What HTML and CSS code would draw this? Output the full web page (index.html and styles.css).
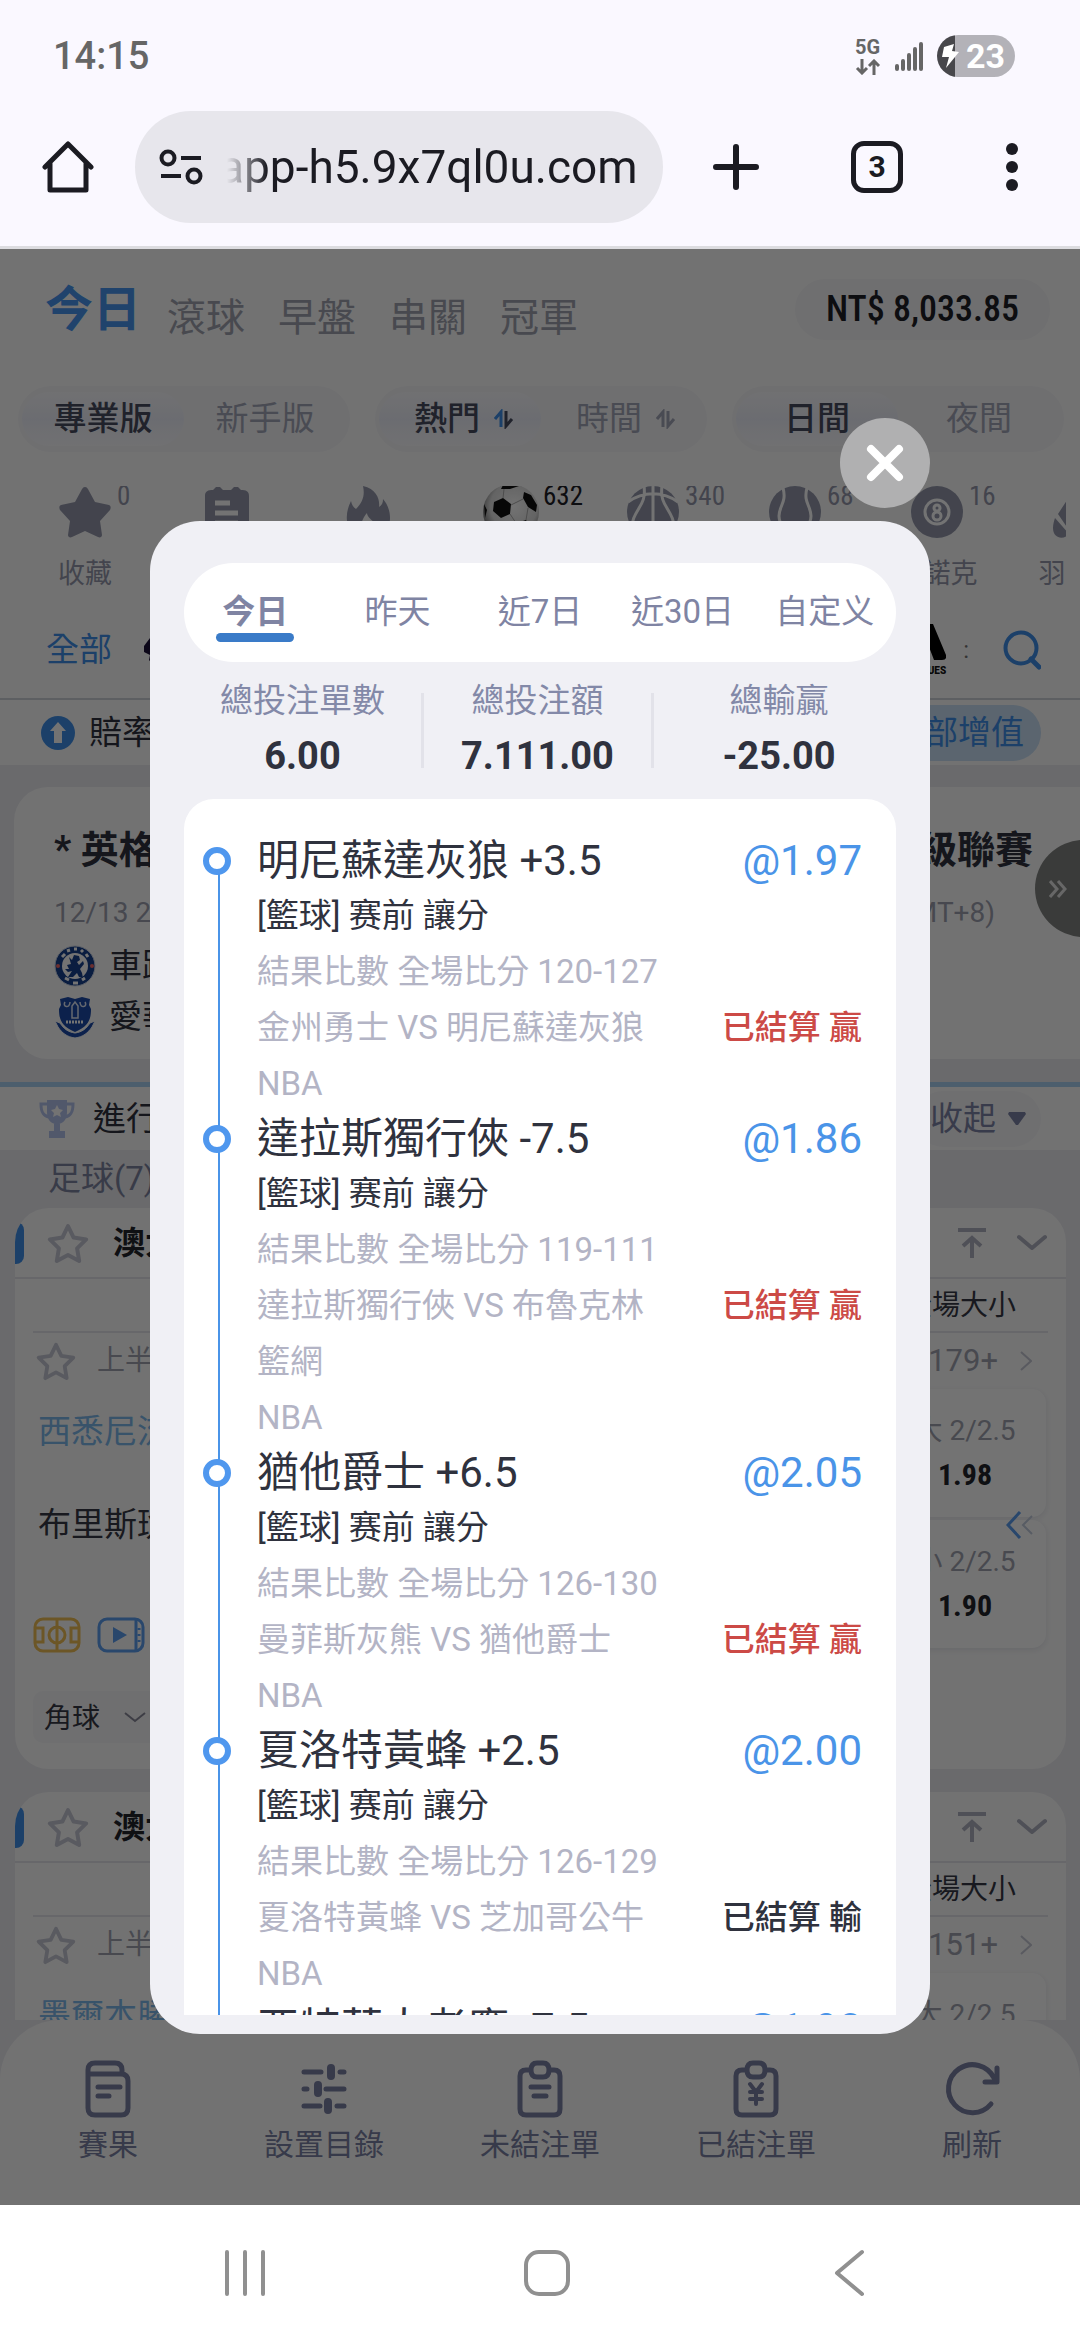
FILE: index.html
```html
<!DOCTYPE html>
<html lang="zh-Hant">
<head>
<meta charset="utf-8">
<meta name="viewport" content="width=device-width">
<title>已結注單</title>
<link rel="stylesheet" href="styles.css">
</head>
<body>
<svg class="defs" aria-hidden="true">
  <symbol id="star-line" viewBox="0 0 44 42"><path d="M22 4l5.600 11.600 12.600 1.800-9.100 9 2.100 12.600L22 33l-11.200 6 2.100-12.600-9.100-9 12.600-1.800z" fill="none" stroke="currentColor" stroke-width="4" stroke-linejoin="round"/></symbol>
  <symbol id="to-top" viewBox="0 0 30 32"><path d="M1 3h28M15 31V11M6 19l9-8 9 8" fill="none" stroke="currentColor" stroke-width="4"/></symbol>
  <symbol id="down" viewBox="0 0 30 18"><path d="M2 3l13 11L28 3" fill="none" stroke="currentColor" stroke-width="4" stroke-linecap="round" stroke-linejoin="round"/></symbol>
  <symbol id="right" viewBox="0 0 12 20"><path d="M1 1l10 9-10 9" fill="none" stroke="currentColor" stroke-width="2"/></symbol>
  <symbol id="sort" viewBox="0 0 20 20"><path d="M1 10l6-7v15" fill="none" stroke="currentColor" stroke-width="3"/><path d="M12 2v15l6-7" fill="none" stroke="var(--sort-down, currentColor)" stroke-width="3"/></symbol>
  <symbol id="field" viewBox="0 0 48 36"><g fill="none" stroke="currentColor" stroke-width="3"><rect x="2" y="2" width="44" height="32" rx="8"/><path d="M24 2v32M2 11h8v14H2M46 11h-8v14h8"/><circle cx="24" cy="18" r="8"/></g></symbol>
  <symbol id="video" viewBox="0 0 48 36"><rect x="2" y="2" width="44" height="32" rx="8" fill="none" stroke="currentColor" stroke-width="3"/><path d="M39 2v32" stroke="currentColor" stroke-width="3"/><path d="M16 10l14 8-14 8z" fill="currentColor"/><path d="M42 11v2M42 17v2M42 23v2" stroke="currentColor" stroke-width="3"/></symbol>
</svg>

<header class="status">
  <time class="clock">14:15</time>
  <div class="status-icons">
    <div class="network"><span>5G</span>
      <svg width="26" height="16" viewBox="0 0 26 16"><path d="M7 0v13M2 9l5 5 5-5M19 16V3M14 7l5-5 5 5" fill="none" stroke="#666" stroke-width="3"/></svg>
    </div>
    <svg width="28" height="30" viewBox="0 0 28 30"><path d="M2 28v-3M8 28v-8M14 28V14M20 28V8M26 28V3" stroke="#666" stroke-width="4" stroke-linecap="round"/></svg>
    <div class="battery">
      <svg width="18" height="26" viewBox="0 0 18 26"><path d="M12 1L2 4 0 14h7L4 25 17 9l-7-1z" fill="#fff"/></svg><span>23</span>
    </div>
  </div>
</header>

<nav class="toolbar" aria-label="瀏覽器">
  <button class="bare" aria-label="首頁"><svg width="52" height="54" viewBox="0 0 52 54"><path d="M3 27L26 4l23 23M8 22v28h36V22" fill="none" stroke="#1b1b22" stroke-width="5" stroke-linejoin="round" stroke-linecap="round"/></svg></button>
  <div class="address">
    <svg width="44" height="36" viewBox="0 0 44 36"><g fill="none" stroke="#1b1b22" stroke-width="4"><circle cx="9" cy="9" r="6.500"/><circle cx="35" cy="27" r="6.500"/><path d="M22 9h20M2 27h20"/></g></svg>
    <input class="url" aria-label="網址" value="app-h5.9x7ql0u.com" readonly>
  </div>
  <button class="bare plus" aria-label="新分頁"><svg width="46" height="46" viewBox="0 0 46 46"><path d="M23 3v40M3 23h40" stroke="#1b1b22" stroke-width="6" stroke-linecap="round"/></svg></button>
  <button class="tab-count" aria-label="分頁">3</button>
  <button class="bare" aria-label="選單"><svg width="12" height="48" viewBox="0 0 12 48"><g fill="#1b1b22"><circle cx="6" cy="6" r="6"/><circle cx="6" cy="24" r="6"/><circle cx="6" cy="42" r="6"/></g></svg></button>
</nav>

<main class="app">
  <div class="content">
    <div class="top">
      <nav class="periods"><a class="on" href="#">今日</a><a href="#">滾球</a><a href="#">早盤</a><a href="#">串關</a><a href="#">冠軍</a></nav>
      <span class="balance">NT$ 8,033.85</span>
    </div>

    <div class="switches">
      <div class="switch"><button class="on">專業版</button><button>新手版</button></div>
      <div class="switch sorting"><button class="on">熱門 <svg width="20" height="20"><use href="#sort"/></svg></button><button>時間 <svg width="20" height="20"><use href="#sort"/></svg></button></div>
      <div class="switch"><button class="on">日間</button><button>夜間</button></div>
    </div>

    <div class="sports">
      <a class="sport" href="#"><span class="pic"><svg viewBox="0 0 52 52"><path d="M26 1c2 0 3 2 4 4l6 11 14 3c2 1 2 3 1 5L41 35l2 14c0 2-2 3-4 2l-13-6-13 6c-2 1-4 0-4-2l2-14L1 24c-1-2-1-4 1-5l14-3 6-11c1-2 2-4 4-4z" fill="currentColor"/></svg><sup>0</sup></span>收藏</a>
      <a class="sport" href="#"><span class="pic"><svg viewBox="0 0 52 52"><path d="M4 10c0-5 3-6 8-6l3-3h4l3 3h8l3-3h4l3 3c5 0 8 1 8 6v36c0 4-2 6-6 6H10c-4 0-6-2-6-6z" fill="currentColor"/><path d="M14 17h15M14 27h23M14 37h23" stroke="#fff" stroke-width="5"/></svg></span>賽事</a>
      <a class="sport" href="#"><span class="pic"><svg viewBox="0 0 52 52"><path d="M20 0c14 3 17 14 16 21 3-2 4-4 4-8 11 12 11 39-14 39C2 52 0 30 8 15c1 4 2 6 5 8 7-7 9-14 7-23z" fill="currentColor"/><path d="M26 46c-12 0-8-12-2-19 0 6 11 9 8 15-1 3-3 4-6 4z" fill="#fff"/></svg></span>熱門</a>
      <a class="sport on" href="#"><span class="pic"><svg viewBox="0 0 52 52"><defs><radialGradient id="ball" cx=".55" cy=".4" r=".6"><stop offset="0" stop-color="#fff"/><stop offset=".7" stop-color="#ddd"/><stop offset="1" stop-color="#777"/></radialGradient></defs><circle cx="26" cy="26" r="28" fill="url(#ball)"/><path d="M9 16l9-4 8 6-1 10-9 4-8-7zM39 6l7 3 6 10-1 7-8-5-5-9zM18-1l10-1 6 2-9 3h-9zM29 38l12-4 5 8-8 9-10-4zM-1 18l3 6-2 8z" fill="#111"/><path d="M26 19l12-6M25 28l6 9M43 22l-2 12M18 12l1-9" stroke="#aaa" stroke-width="1"/></svg><sup>632</sup></span>足球</a>
      <a class="sport" href="#"><span class="pic"><svg viewBox="0 0 52 52"><circle cx="26" cy="26" r="26" fill="currentColor"/><path d="M26 0v52M1 16c15-11 35-11 50 0M17 0c3 22-12 22-13 46M35 0c-3 22 12 22 13 46" fill="none" stroke="#fff" stroke-width="3"/></svg><sup>340</sup></span>籃球</a>
      <a class="sport" href="#"><span class="pic"><svg viewBox="0 0 52 52"><circle cx="26" cy="26" r="26" fill="currentColor"/><path d="M14 2c4 14-4 18-4 28 0 8 5 14 8 20M38 2c-4 14 4 18 4 28 0 8-5 14-8 20" fill="none" stroke="#fff" stroke-width="3"/></svg><sup>68</sup></span>網球</a>
      <a class="sport" href="#"><span class="pic"><svg viewBox="0 0 52 52"><circle cx="26" cy="26" r="26" fill="currentColor"/><circle cx="26" cy="26" r="12" fill="none" stroke="#fff" stroke-width="3"/><circle cx="26" cy="22" r="3" fill="none" stroke="#fff" stroke-width="3"/><circle cx="26" cy="30" r="4" fill="none" stroke="#fff" stroke-width="3"/></svg><sup>16</sup></span>斯諾克</a>
      <a class="sport" href="#"><span class="pic"><svg viewBox="0 0 52 52"><path d="M2 32l14 16c-5 6-16 5-16-6 0-4 1-7 2-10zM5 28L18 8l34-8-22 36-12 11z" fill="currentColor"/></svg></span>羽毛球</a>
    </div>

    <div class="leagues">
      <a href="#">全部</a>
      <svg class="lion" width="30" height="40" viewBox="0 0 30 40"><path d="M2 16l6-8 18-4v34l-14-2-5-6 1-5-6-3z" fill="#1c1038"/></svg>
      <span class="laliga"><svg width="40" height="36" viewBox="0 0 40 36"><path d="M0 36L14 0h13l13 31q1 5-4 5h-8L20 15l-7 21z"/></svg><small>LEAGUES</small></span>
      <span class="more">:</span>
      <button class="bare" aria-label="搜尋"><svg width="38" height="40" viewBox="0 0 38 40"><circle cx="18" cy="18" r="15.500" fill="none" stroke="#3f8fe8" stroke-width="4"/><path d="M28 29l8 8" stroke="#3f8fe8" stroke-width="5" stroke-linecap="round"/></svg></button>
    </div>

    <div class="boost">
      <svg width="34" height="34" viewBox="0 0 34 34"><circle cx="17" cy="17" r="17" fill="#3f8fe8"/><path d="M17 6l8 9h-4v12h-8V15H9z" fill="#fff"/></svg>
      <span>賠率</span><a class="boost-all" href="#">全部增值</a>
    </div>

    <div class="promo-zone">
      <section class="promo">
        <h2><span>* 英格蘭</span><span>超級聯賽</span></h2>
        <p class="when"><span>12/13 23:00</span><span>(GMT+8)</span></p>
        <div class="club"><svg width="42" height="42" viewBox="0 0 42 42"><circle cx="21" cy="21" r="20" fill="#17428f" stroke="#cfd6e6" stroke-width="1"/><circle cx="21" cy="21" r="13" fill="#fff"/><path d="M8 12l3-3M13 6l3-1M20 4h3M27 5l2 2M32 9l2 3M11 33l4 2M19 38h5M28 35l3-2" stroke="#fff" stroke-width="3"/><circle cx="4" cy="21" r="2" fill="#e66"/><circle cx="38" cy="21" r="2" fill="#e66"/><path d="M15 12l3 3 2-5 5 1 1 4-3 2 2 3 4-4 1 3-4 5 2 4 1 5-4-1-2-4-4 4h-5l4-6-4 1-3-3 4 0-2-4 4-1z" fill="#17428f"/></svg>車路士</div>
        <div class="club"><svg width="42" height="42" viewBox="0 0 42 42"><path d="M6 3l8-2 7 2 7-2 8 2-1 6 2 4c0 10-2 17-16 23C7 30 5 23 5 13l2-4z" fill="#1b4aa8"/><path d="M1 25l5 2c4 6 8 9 15 10 7-1 11-4 15-10l5-2-3 6c-4 6-9 10-17 11-8-1-13-5-17-11z" fill="#1b4aa8" stroke="#fff" stroke-width="1"/><path d="M11 6c-3 5 5 7 5 0M26 6c0 7 8 5 5 0M18 22V10l3-4 3 4v12z" fill="none" stroke="#dfe6f5" stroke-width="1.500"/><path d="M12 26h18" stroke="#fff" stroke-width="3" stroke-dasharray="2 1"/></svg>愛華頓</div>
      </section>
    </div>

    <div class="live">
      <svg width="36" height="38" viewBox="0 0 36 38"><path d="M8 0h20v12c0 8-4 12-10 12S8 20 8 12zM15 23h6v8h-6zM10 31h16v7H10z" fill="#b4c3ee"/><path d="M8 4H2c0 8 2 12 8 13M28 4h6c0 8-2 12-8 13" fill="none" stroke="#b4c3ee" stroke-width="3"/><path d="M18 5l2 4 4 1-3 3 1 4-4-2-4 2 1-4-3-3 4-1z" fill="#fff"/></svg>
      <span>進行中</span>
      <button class="collapse">收起 <svg width="18" height="13" viewBox="0 0 18 13"><path d="M1 0h16l1 2-8 11H8L0 2z" fill="#7d84a6"/></svg></button>
    </div>

    <div class="matches">
      <h3>足球(7)</h3>
      <article class="match">
        <header><svg class="fav" width="44" height="42"><use href="#star-line"/></svg><b>澳大利亞甲級聯賽</b><svg width="30" height="32"><use href="#to-top"/></svg><svg width="30" height="18"><use href="#down"/></svg></header>
        <div class="cols"><span>全場大小</span></div>
        <div class="meta"><svg width="42" height="40"><use href="#star-line"/></svg><span>上半場</span><a href="#">179+ <svg width="12" height="20"><use href="#right"/></svg></a></div>
        <div class="body">
          <div class="teams">
            <p class="home">西悉尼流浪者</p><p class="away">布里斯班獅吼</p>
            <div class="media"><svg class="gold" width="48" height="36"><use href="#field"/></svg><svg class="blue" width="48" height="36"><use href="#video"/></svg></div>
            <select class="market" aria-label="玩法"><option>角球</option></select>
          </div>
          <div class="odds">
            <button><span>大 2/2.5</span><b>1.98</b></button>
            <button><span>小 2/2.5</span><b>1.90</b></button>
            <svg class="swipe" width="28" height="30" viewBox="0 0 28 30"><path d="M14 2L2 15l12 13" fill="none" stroke="#5b9df0" stroke-width="3"/><path d="M26 6l-9 9 9 9" fill="none" stroke="#c4cdde" stroke-width="2"/></svg>
          </div>
        </div>
      </article>
      <article class="match">
        <header><svg class="fav" width="44" height="42"><use href="#star-line"/></svg><b>澳大利亞甲級聯賽</b><svg width="30" height="32"><use href="#to-top"/></svg><svg width="30" height="18"><use href="#down"/></svg></header>
        <div class="cols"><span>全場大小</span></div>
        <div class="meta"><svg width="42" height="40"><use href="#star-line"/></svg><span>上半場</span><a href="#">151+ <svg width="12" height="20"><use href="#right"/></svg></a></div>
        <div class="body">
          <div class="teams"><p class="home">墨爾本勝利</p></div>
          <div class="odds"><button><span>大 2/2.5</span><b>1.98</b></button></div>
        </div>
      </article>
    </div>
  </div>

  <button class="drawer" aria-label="展開"><svg width="18" height="18" viewBox="0 0 18 18"><path d="M1 1l7 8-7 8M9 1l7 8-7 8" fill="none" stroke="#e4e4e4" stroke-width="3"/></svg></button>

  <nav class="tabbar">
    <a href="#"><svg width="58" height="58" viewBox="0 0 58 58"><g fill="none" stroke="currentColor" stroke-width="5" stroke-linecap="round" stroke-linejoin="round"><path d="M9 14v34q0 7 7 7h26q7 0 7-7V21q0-7-7-7H9V10q0-7 7-7h20q7 0 7 7v4M19 27h22M19 36h11"/></g></svg>賽果</a>
    <a href="#"><svg width="58" height="58" viewBox="0 0 58 58"><g stroke="currentColor" stroke-width="5" stroke-linecap="round"><path d="M9 12h17M45 12h4M9 29h3M31 29h18M9 46h16M42 46h7"/><path d="M36 8v8M23 25v8M33 42v8" stroke-width="8"/></g></svg>設置目錄</a>
    <a href="#"><svg width="58" height="58" viewBox="0 0 58 58"><g fill="none" stroke="currentColor" stroke-width="5" stroke-linecap="round" stroke-linejoin="round"><path d="M19 10h-4q-6 0-6 6v33q0 6 6 6h28q6 0 6-6V16q0-6-6-6h-4M20 10q0-7 6-7h6q6 0 6 7t-6 7h-6q-6 0-6-7zM20 27h18M23 36h12"/></g></svg>未結注單</a>
    <a href="#"><svg width="58" height="58" viewBox="0 0 58 58"><g fill="none" stroke="currentColor" stroke-width="5" stroke-linecap="round" stroke-linejoin="round"><path d="M19 10h-4q-6 0-6 6v33q0 6 6 6h28q6 0 6-6V16q0-6-6-6h-4M20 10q0-7 6-7h6q6 0 6 7t-6 7h-6q-6 0-6-7z"/><path stroke-width="4" d="M23 24l6 8 6-8M29 32v12M23 32h12M23 39h12"/></g></svg>已結注單</a>
    <a href="#"><svg width="58" height="58" viewBox="0 0 58 58"><g fill="none" stroke="currentColor" stroke-width="5" stroke-linecap="round" stroke-linejoin="round"><path d="M48 44A24 24 0 1 1 51 18M54 8v14H42"/></g></svg>刷新</a>
  </nav>

  <div class="overlay">
    <section class="dialog" role="dialog" aria-label="已結注單">
      <button class="close" aria-label="關閉"><svg width="40" height="40" viewBox="0 0 40 40"><path d="M6 6l28 28M34 6L6 34" stroke="#fff" stroke-width="8" stroke-linecap="round"/></svg></button>
      <nav class="range"><button class="on">今日</button><button>昨天</button><button>近7日</button><button>近30日</button><button>自定义</button></nav>
      <dl class="totals">
        <div><dt>總投注單數</dt><dd>6.00</dd></div>
        <div><dt>總投注額</dt><dd>7.111.00</dd></div>
        <div><dt>總輸贏</dt><dd>-25.00</dd></div>
      </dl>
      <ul class="bets">
        <li>
          <div class="row pick"><strong>明尼蘇達灰狼 +3.5</strong><em>@1.97</em></div>
          <p>[籃球] 赛前 讓分</p>
          <p class="muted">結果比數 全場比分 120-127</p>
          <div class="row"><p class="muted">金州勇士 VS 明尼蘇達灰狼</p><span class="win">已結算 贏</span></div>
          <p class="muted">NBA</p>
        </li>
        <li>
          <div class="row pick"><strong>達拉斯獨行俠 -7.5</strong><em>@1.86</em></div>
          <p>[籃球] 赛前 讓分</p>
          <p class="muted">結果比數 全場比分 119-111</p>
          <div class="row"><p class="muted">達拉斯獨行俠 VS 布魯克林籃網</p><span class="win">已結算 贏</span></div>
          <p class="muted">NBA</p>
        </li>
        <li>
          <div class="row pick"><strong>猶他爵士 +6.5</strong><em>@2.05</em></div>
          <p>[籃球] 赛前 讓分</p>
          <p class="muted">結果比數 全場比分 126-130</p>
          <div class="row"><p class="muted">曼菲斯灰熊 VS 猶他爵士</p><span class="win">已結算 贏</span></div>
          <p class="muted">NBA</p>
        </li>
        <li>
          <div class="row pick"><strong>夏洛特黃蜂 +2.5</strong><em>@2.00</em></div>
          <p>[籃球] 赛前 讓分</p>
          <p class="muted">結果比數 全場比分 126-129</p>
          <div class="row"><p class="muted">夏洛特黃蜂 VS 芝加哥公牛</p><span class="lose">已結算 輸</span></div>
          <p class="muted">NBA</p>
        </li>
        <li>
          <div class="row pick"><strong>亞特蘭大老鷹 -7.5</strong><em>@1.90</em></div>
        </li>
      </ul>
    </section>
  </div>
</main>

<nav class="sysnav" aria-label="系統">
  <button class="bare" aria-label="最近"><svg width="44" height="46" viewBox="0 0 44 46"><path d="M4 2v42M22 2v42M40 2v42" stroke="#909090" stroke-width="4" stroke-linecap="round"/></svg></button>
  <button class="bare" aria-label="主畫面"><svg width="48" height="48" viewBox="0 0 48 48"><rect x="3" y="3" width="42" height="42" rx="13" fill="none" stroke="#909090" stroke-width="4"/></svg></button>
  <button class="bare" aria-label="返回"><svg width="32" height="48" viewBox="0 0 32 48"><path d="M29 3L4 24l25 21" fill="none" stroke="#909090" stroke-width="4" stroke-linecap="round" stroke-linejoin="round"/></svg></button>
</nav>
</body>
</html>
```

FILE: styles.css
```css
*, *::before, *::after { box-sizing: border-box; }

body {
  margin: 0;
  height: 100vh;
  display: flex;
  flex-direction: column;
  background: #faf8ff;
  color: #2f323e;
  font: 33px/56px Roboto, "Noto Sans CJK TC", sans-serif;
}

h2, h3, p, dl, dd, ul { margin: 0; padding: 0; }
a { color: inherit; text-decoration: none; }
button, input, select { font: inherit; color: inherit; border: 0; padding: 0; margin: 0; background: none; }
svg { display: block; flex: none; }
.defs { position: absolute; width: 0; height: 0; }
.bare { display: flex; align-items: center; justify-content: center; }

/* phone status bar */
.status {
  display: flex;
  justify-content: space-between;
  align-items: center;
  height: 112px;
  padding: 0 65px 0 53px;
  color: #666;
}
.clock { font-size: 38px; font-weight: 500; }
.status-icons { display: flex; align-items: center; gap: 14px; }
.network { font-size: 20px; line-height: 20px; font-weight: 700; display: grid; gap: 2px; }
.battery {
  display: flex;
  align-items: center;
  gap: 6px;
  width: 78px;
  height: 42px;
  padding-left: 5px;
  border-radius: 21px;
  background: linear-gradient(90deg, #47474b 18px, #b3b2b8 18px);
  color: #fff;
  font-size: 34px;
  font-weight: 700;
  line-height: 42px;
}

/* browser toolbar */
.toolbar {
  display: flex;
  align-items: center;
  height: 137px;
  padding: 0 62px 25px 42px;
  border-bottom: 3px solid #dcdce0;
}
.address {
  flex: 1;
  min-width: 0;
  display: flex;
  align-items: center;
  gap: 24px;
  height: 112px;
  margin: 0 50px 0 41px;
  padding: 0 12px 0 24px;
  border-radius: 56px;
  background: #e7e6ec;
}
.url {
  flex: 1;
  min-width: 0;
  height: 60px;
  font-size: 46px;
  text-indent: -8px;
  color: #1b1b22;
  -webkit-mask-image: linear-gradient(90deg, transparent, #000 40px);
  mask-image: linear-gradient(90deg, transparent, #000 40px);
}
.plus { margin-right: 92px; }
.tab-count {
  flex: none;
  width: 52px;
  height: 52px;
  margin-right: 103px;
  border: 5px solid #1b1b22;
  border-radius: 13px;
  font-size: 30px;
  font-weight: 700;
  line-height: 42px;
  color: #1b1b22;
}

/* betting page */
.app {
  position: relative;
  flex: 1;
  min-height: 0;
  display: flex;
  flex-direction: column;
  overflow: hidden;
  background: #ebebf0;
}
.content { flex: 1; min-height: 0; overflow: hidden; background: #fdfdfd; }

.top { display: flex; justify-content: space-between; padding: 30px 30px 0 45px; }
.periods { display: flex; align-items: flex-end; gap: 33px; font-size: 39px; line-height: 44px; color: #a0a3b0; }
.periods .on { margin-right: -7px; font-size: 48px; line-height: 61px; font-weight: 700; color: #4795f0; }
.balance {
  width: 255px;
  border-radius: 31px;
  background: #f6f6f8;
  text-align: center;
  font: 500 36px/61px "Roboto Condensed", "Liberation Sans Narrow", Roboto, sans-serif;
  color: #1e2026;
}

.switches { display: flex; gap: 25px; margin-top: 46px; padding: 0 16px 0 18px; }
.switch { flex: 1; display: flex; height: 66px; padding: 6px 4px; border-radius: 33px; background: #f6f6f9; }
.switch button {
  flex: 1;
  display: flex;
  align-items: center;
  justify-content: center;
  gap: 14px;
  border-radius: 27px;
  line-height: 54px;
  color: #a3a6b8;
}
.switch.sorting button { padding-left: 8px; }
.switch .on { background: linear-gradient(#fafafd, #eef0fa 50%, #fafafd); color: #484c60; font-weight: 500; }
.switch .on svg { color: #3f8fe8; --sort-down: #484c60; }

.sports { display: flex; margin: 34px 14px 0; overflow: hidden; color: #9498ac; }
.sport { flex: 0 0 142px; text-align: center; font-size: 27px; line-height: 34px; }
.pic { position: relative; display: block; width: 52px; margin: 0 auto 19px; }
.pic svg { width: 52px; height: 52px; overflow: visible; }
.pic sup {
  position: absolute;
  left: 58px;
  top: -4px;
  font: 27px/28px "Roboto Condensed", "Liberation Sans Narrow", Roboto, sans-serif;
}
.sport.on { color: #1e2026; }

.leagues {
  display: flex;
  align-items: center;
  height: 98px;
  margin-top: 11px;
  padding: 0 39px 0 46px;
  border-bottom: 2px solid #cfd3da;
  color: #3f8fe8;
}
.lion { margin-left: 30px; }
.laliga { margin-left: auto; display: grid; justify-items: end; gap: 6px; }
.laliga small { font-size: 10px; line-height: 10px; font-weight: 900; color: #111; }
.more { margin: 0 34px 0 17px; font-size: 24px; color: #777; }

.boost { display: flex; align-items: center; gap: 14px; height: 65px; padding: 0 39px 0 41px; }
.boost-all { margin-left: auto; padding: 0 17px; border-radius: 28px; background: #c9e0f6; color: #3f8fe8; }

.promo-zone { padding: 22px 0 23px 14px; background: #ebebf0; }
.promo { height: 272px; padding: 38px 47px 17px 40px; border-radius: 34px 0 0 34px; background: #fdfdfd; }
.promo h2 { display: flex; justify-content: space-between; font-size: 38px; line-height: 50px; }
.when { display: flex; justify-content: space-between; margin: 20px 38px 9px 0; font-size: 28px; line-height: 36px; color: #9ea1b0; }
.club { display: flex; align-items: center; gap: 13px; height: 51px; }

.live { display: flex; align-items: center; height: 68px; padding: 0 39px; border-top: 5px solid #a9d1f2; }
.live > span { margin-left: 18px; }
.collapse {
  display: flex;
  align-items: center;
  gap: 12px;
  margin-left: auto;
  padding: 0 15px;
  border-radius: 28px;
  background: #f6f6f9;
  color: #7d84a6;
}

.matches { background: #ebebf0; padding: 0 14px 0 15px; }
.matches h3 { padding-left: 33px; font-size: 33px; font-weight: 400; line-height: 58px; color: #7d84a0; }
.match { margin-bottom: 23px; border-radius: 34px; background: #fdfdfd; color: #b0b2c0; overflow: hidden; }
.match header {
  display: flex;
  align-items: center;
  gap: 30px;
  height: 71px;
  padding: 0 19px 0 0;
  border-bottom: 2px solid #e4e5ea;
}
.match header::before { content: ""; width: 9px; height: 42px; margin-right: -8px; border-radius: 0 8px 8px 0; background: #3f8fe8; }
.match header b { flex: 1; margin-left: -7px; font-size: 32px; font-weight: 700; color: #22242c; }
.fav { color: #c6c8d4; }
.cols { margin: 0 18px; height: 54px; border-bottom: 2px solid #e4e5ea; text-align: right; font-size: 28px; line-height: 54px; color: #363945; }
.cols span { margin-right: 32px; }
.meta { display: flex; align-items: center; height: 56px; padding: 0 34px 0 20px; font-size: 28px; color: #a0a3b0; }
.meta svg { color: #c6c8d4; }
.meta span { margin-left: 20px; }
.meta a { display: flex; align-items: center; gap: 22px; margin-left: auto; font-size: 31px; }
.body { display: flex; justify-content: space-between; padding: 0 20px 26px 18px; }
.home { padding-left: 5px; line-height: 86px; color: #7cb8ec; }
.away { padding-left: 5px; line-height: 100px; color: #363945; }
.media { display: flex; gap: 16px; margin-top: 42px; }
.gold { color: #f0bf55; }
.blue { color: #5b9df0; }
.market {
  appearance: none;
  display: block;
  width: 130px;
  height: 52px;
  margin-top: 38px;
  padding-left: 11px;
  border-radius: 10px;
  font-size: 28px;
  color: #363945;
  background: #f7f7f9 url("data:image/svg+xml,%3Csvg xmlns='http://www.w3.org/2000/svg' width='22' height='11'%3E%3Cpath d='M1 1l10 8 10-8' fill='none' stroke='%23889' stroke-width='2'/%3E%3C/svg%3E") no-repeat right 17px center;
}
.odds { position: relative; display: flex; flex-direction: column; gap: 3px; }
.odds button {
  display: block;
  width: 162px;
  height: 128px;
  border-radius: 14px;
  background: #fff;
  box-shadow: 0 2px 6px #e6e7ec;
  font-size: 28px;
  line-height: 44px;
  color: #a0a3b0;
}
.odds span, .odds b { display: block; }
.odds b { font: 700 30px/44px "Roboto Condensed", "Liberation Sans Narrow", Roboto, sans-serif; color: #22242c; }
.swipe { position: absolute; right: 12px; top: 121px; }

.drawer {
  position: absolute;
  right: -52px;
  top: 591px;
  width: 97px;
  height: 97px;
  padding-left: 14px;
  border-radius: 50%;
  background: #828482;
}

.tabbar {
  display: flex;
  height: 185px;
  padding-top: 40px;
  border-radius: 60px 60px 0 0;
  background: #fdfdfd;
  color: #7b80a4;
}
.tabbar a { flex: 1; display: flex; flex-direction: column; align-items: center; gap: 7px; font-size: 30px; line-height: 40px; }

/* settled bets dialog */
.overlay {
  position: absolute;
  inset: 0;
  display: flex;
  padding: 272px 150px 171px;
  background: rgba(0, 0, 0, .55);
}
.dialog {
  position: relative;
  flex: 1;
  min-height: 0;
  display: flex;
  flex-direction: column;
  padding: 42px 34px 19px;
  border-radius: 50px;
  background: #f0f0f5;
}
.close {
  position: absolute;
  right: 0;
  top: -103px;
  display: flex;
  align-items: center;
  justify-content: center;
  width: 90px;
  height: 90px;
  border-radius: 50%;
  background: #b0b0b1;
}
.range { flex: none; display: flex; height: 99px; border-radius: 50px; background: #fff; }
.range button {
  flex: 1;
  display: flex;
  flex-direction: column;
  align-items: center;
  padding-top: 21px;
  line-height: 56px;
  color: #7f84a3;
}
.range .on { font-weight: 700; }
.range .on::after { content: ""; width: 78px; height: 9px; margin-top: -7px; border-radius: 5px; background: #3a7bc8; }

.totals { flex: none; display: grid; grid-template-columns: 24fr 23fr 25fr; margin-right: -8px; padding: 31px 0; text-align: center; }
.totals div { height: 75px; border-right: 3px solid #e2e2e9; }
.totals div:last-child { border: 0; }
.totals dt { margin-top: -20px; color: #8389a8; }
.totals dd { font-size: 38px; line-height: 54px; font-weight: 700; }

.bets { flex: 1; min-height: 0; overflow: hidden; padding: 35px 34px 0 19px; border-radius: 30px 30px 0 0; background: #fff; list-style: none; }
.bets li { position: relative; padding-left: 54px; }
.bets li::before { content: ""; position: absolute; left: 15px; top: 30px; bottom: -30px; width: 2px; background: #4a94e8; }
.bets li::after { content: ""; position: absolute; left: 0; top: 13px; width: 28px; height: 28px; border: 6px solid #4f97ee; border-radius: 50%; background: #fff; }
.row { display: flex; justify-content: space-between; }
.row p { flex: 0 1 408px; }
.row > span { flex: none; font-weight: 500; }
.pick { font-size: 42px; line-height: 54px; }
.pick strong, .pick em { font-weight: 400; font-style: normal; }
.pick em { color: #4a94e8; }
.muted { color: #b3b4c5; }
.win { color: #cc4a46; }

/* system navigation */
.sysnav { display: flex; height: 135px; padding: 0 80px 0 94px; background: #fff; }
.sysnav button { flex: 1; }
```
